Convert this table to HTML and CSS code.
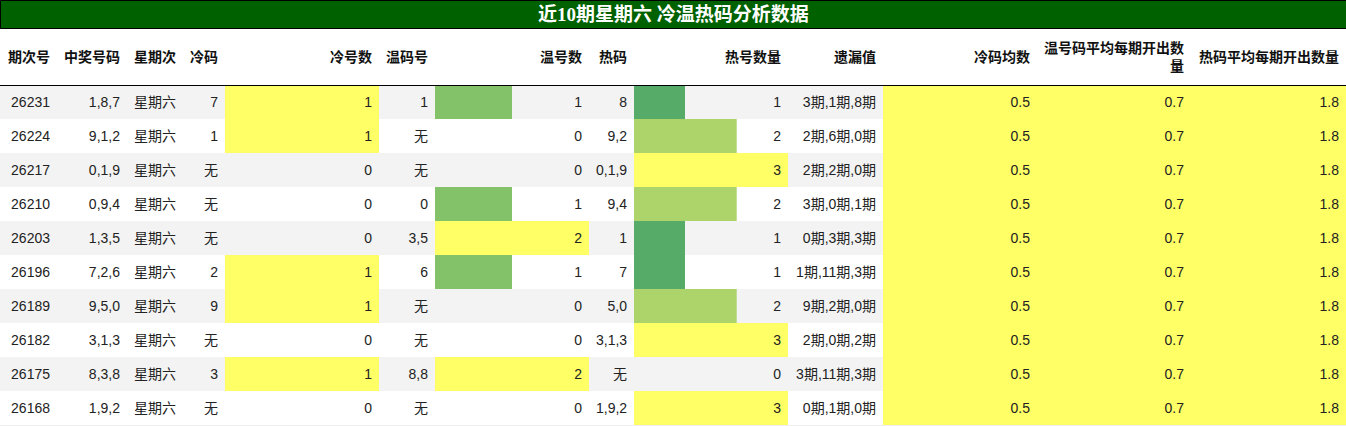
FILE: index.html
```html
<!DOCTYPE html>
<html lang="zh">
<head>
<meta charset="utf-8">
<title>冷温热码分析数据</title>
<link rel="stylesheet" href="styles.css">
</head>
<body>
<div class="title">近10期星期六 冷温热码分析数据</div>
<table class="data">
  <colgroup>
    <col class="w57"><col class="w70"><col class="w56"><col class="w42">
    <col class="w154"><col class="w56"><col class="w154"><col class="w45">
    <col class="w154"><col class="w95"><col class="w154"><col class="w154"><col class="w155">
  </colgroup>
  <thead>
    <tr>
      <th>期次号</th><th>中奖号码</th><th>星期次</th><th>冷码</th><th>冷号数</th><th>温码号</th><th>温号数</th><th>热码</th><th>热号数量</th><th>遗漏值</th><th>冷码均数</th><th>温号码平均每期开出数量</th><th>热码平均每期开出数量</th>
    </tr>
  </thead>
  <tbody>
    <tr><td>26231</td><td>1,8,7</td><td>星期六</td><td>7</td><td class="bar c4" style="background-size:100% 100%">1</td><td>1</td><td class="bar c2" style="background-size:50% 100%">1</td><td>8</td><td class="bar c1" style="background-size:33.3% 100%">1</td><td>3期,1期,8期</td><td class="y">0.5</td><td class="y">0.7</td><td class="y">1.8</td></tr>
    <tr><td>26224</td><td>9,1,2</td><td>星期六</td><td>1</td><td class="bar c4" style="background-size:100% 100%">1</td><td>无</td><td>0</td><td>9,2</td><td class="bar c3" style="background-size:66.7% 100%">2</td><td>2期,6期,0期</td><td class="y">0.5</td><td class="y">0.7</td><td class="y">1.8</td></tr>
    <tr><td>26217</td><td>0,1,9</td><td>星期六</td><td>无</td><td>0</td><td>无</td><td>0</td><td>0,1,9</td><td class="bar c4" style="background-size:100% 100%">3</td><td>2期,2期,0期</td><td class="y">0.5</td><td class="y">0.7</td><td class="y">1.8</td></tr>
    <tr><td>26210</td><td>0,9,4</td><td>星期六</td><td>无</td><td>0</td><td>0</td><td class="bar c2" style="background-size:50% 100%">1</td><td>9,4</td><td class="bar c3" style="background-size:66.7% 100%">2</td><td>3期,0期,1期</td><td class="y">0.5</td><td class="y">0.7</td><td class="y">1.8</td></tr>
    <tr><td>26203</td><td>1,3,5</td><td>星期六</td><td>无</td><td>0</td><td>3,5</td><td class="bar c4" style="background-size:100% 100%">2</td><td>1</td><td class="bar c1" style="background-size:33.3% 100%">1</td><td>0期,3期,3期</td><td class="y">0.5</td><td class="y">0.7</td><td class="y">1.8</td></tr>
    <tr><td>26196</td><td>7,2,6</td><td>星期六</td><td>2</td><td class="bar c4" style="background-size:100% 100%">1</td><td>6</td><td class="bar c2" style="background-size:50% 100%">1</td><td>7</td><td class="bar c1" style="background-size:33.3% 100%">1</td><td>1期,11期,3期</td><td class="y">0.5</td><td class="y">0.7</td><td class="y">1.8</td></tr>
    <tr><td>26189</td><td>9,5,0</td><td>星期六</td><td>9</td><td class="bar c4" style="background-size:100% 100%">1</td><td>无</td><td>0</td><td>5,0</td><td class="bar c3" style="background-size:66.7% 100%">2</td><td>9期,2期,0期</td><td class="y">0.5</td><td class="y">0.7</td><td class="y">1.8</td></tr>
    <tr><td>26182</td><td>3,1,3</td><td>星期六</td><td>无</td><td>0</td><td>无</td><td>0</td><td>3,1,3</td><td class="bar c4" style="background-size:100% 100%">3</td><td>2期,0期,2期</td><td class="y">0.5</td><td class="y">0.7</td><td class="y">1.8</td></tr>
    <tr><td>26175</td><td>8,3,8</td><td>星期六</td><td>3</td><td class="bar c4" style="background-size:100% 100%">1</td><td>8,8</td><td class="bar c4" style="background-size:100% 100%">2</td><td>无</td><td>0</td><td>3期,11期,3期</td><td class="y">0.5</td><td class="y">0.7</td><td class="y">1.8</td></tr>
    <tr><td>26168</td><td>1,9,2</td><td>星期六</td><td>无</td><td>0</td><td>无</td><td>0</td><td>1,9,2</td><td class="bar c4" style="background-size:100% 100%">3</td><td>0期,1期,0期</td><td class="y">0.5</td><td class="y">0.7</td><td class="y">1.8</td></tr>
  </tbody>
</table>
</body>
</html>
```
FILE: styles.css
```css
html, body {
  margin: 0;
  padding: 0;
  background: #ffffff;
}

body {
  width: 1346px;
  overflow: hidden;
  font-family: "Liberation Sans", "Noto Sans CJK SC", sans-serif;
  color: #222222;
}

.title {
  box-sizing: border-box;
  height: 29px;
  border: 1px solid #000000;
  border-right: none;
  background: #006100;
  color: #ffffff;
  font-family: "Liberation Serif", "Noto Sans CJK SC", serif;
  font-weight: bold;
  font-size: 19px;
  line-height: 27px;
  text-align: center;
}

.data {
  width: 1346px;
  table-layout: fixed;
  border-collapse: collapse;
  border-spacing: 0;
  font-size: 14px;
}

.w42 { width: 42px; }
.w45 { width: 45px; }
.w56 { width: 56px; }
.w57 { width: 57px; }
.w70 { width: 70px; }
.w95 { width: 95px; }
.w154 { width: 154px; }
.w155 { width: 155px; }

.data th {
  height: 56px;
  padding: 0 7px;
  box-sizing: border-box;
  text-align: right;
  vertical-align: middle;
  font-weight: bold;
  color: #111111;
  line-height: 18px;
  border-bottom: 1px solid #000000;
}

.data td {
  height: 34px;
  padding: 0 7px;
  box-sizing: border-box;
  text-align: right;
  vertical-align: middle;
  white-space: nowrap;
  line-height: 18px;
}

.data tbody tr:nth-child(odd) td {
  background-color: #f3f3f3;
}

.data tbody tr:nth-child(even) td {
  background-color: #ffffff;
}

.data tbody tr:last-child td {
  border-bottom: 1px solid #eeeeee;
}

.data tbody tr td.bar {
  background-repeat: no-repeat;
  background-position: left top;
}

.data tbody tr td.c1 { background-image: linear-gradient(#57ab68, #57ab68); }
.data tbody tr td.c2 { background-image: linear-gradient(#84c26a, #84c26a); }
.data tbody tr td.c3 { background-image: linear-gradient(#add46a, #add46a); }
.data tbody tr td.c4 { background-image: linear-gradient(#ffff66, #ffff66); }

.data tbody tr td.y {
  background-color: #ffff66;
}
```
